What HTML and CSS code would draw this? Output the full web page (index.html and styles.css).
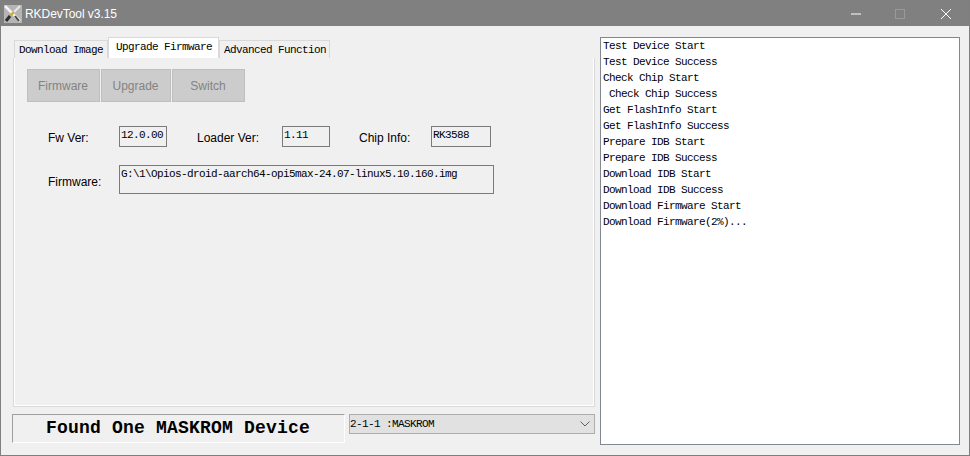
FILE: index.html
```html
<!DOCTYPE html>
<html lang="en">
<head>
<meta charset="utf-8">
<title>RKDevTool v3.15</title>
<link rel="stylesheet" href="styles.css">
</head>
<body>
<div class="window">
  <header class="titlebar">
    <svg class="app-icon" width="18" height="18" viewBox="0 0 18 18">
      <rect width="18" height="18" fill="#b5b5b5"/>
      <path d="M1 1L16 16" stroke="#f4f4f4" stroke-width="2.500"/>
      <path d="M16 1L9 8" stroke="#e8e8e8" stroke-width="2"/>
      <path d="M10 7L6 11" stroke="#c9b04a" stroke-width="2.500"/>
      <path d="M6 11L2 16" stroke="#2c2c2c" stroke-width="3"/>
      <path d="M11 11L15 16" stroke="#444" stroke-width="2"/>
    </svg>
    <span class="title">RKDevTool v3.15</span>
    <div class="controls">
      <svg class="ctl" width="46" height="26" viewBox="0 0 46 26"><path d="M20 13h10" stroke="#fff" fill="none"/></svg>
      <svg class="ctl" width="46" height="26" viewBox="0 0 46 26"><rect x="18.500" y="8.500" width="9" height="9" stroke="#999" fill="none"/></svg>
      <svg class="ctl" width="46" height="26" viewBox="0 0 46 26"><path d="M18 8l10 10M28 8L18 18" stroke="#fff" fill="none"/></svg>
    </div>
  </header>
  <main class="content">
    <section class="left">
      <nav class="tabs">
        <div class="tab">Download Image</div>
        <div class="tab active">Upgrade Firmware</div>
        <div class="tab">Advanced Function</div>
      </nav>
      <div class="pane">
        <div class="buttons">
          <div class="btn b1">Firmware</div>
          <div class="btn b2">Upgrade</div>
          <div class="btn b3">Switch</div>
        </div>
        <div class="info">
          <span class="label l1">Fw Ver:</span>
          <span class="field f1">12.0.00</span>
          <span class="label l2">Loader Ver:</span>
          <span class="field f2">1.11</span>
          <span class="label l3">Chip Info:</span>
          <span class="field f3">RK3588</span>
        </div>
        <div class="fwrow">
          <span class="label l1 fwlabel">Firmware:</span>
          <span class="field f4">G:\1\Opios-droid-aarch64-opi5max-24.07-linux5.10.160.img</span>
        </div>
      </div>
      <div class="bottom">
        <div class="status">Found One MASKROM Device</div>
        <div class="combo">
          <span>2-1-1 :MASKROM</span>
          <svg width="10" height="6" viewBox="0 0 10 6"><path d="M.5.500L5 5 9.500.500" stroke="#606060" fill="none"/></svg>
        </div>
      </div>
    </section>
    <aside class="log">
      <div>Test Device Start</div>
      <div>Test Device Success</div>
      <div>Check Chip Start</div>
      <div>&nbsp;Check Chip Success</div>
      <div>Get FlashInfo Start</div>
      <div>Get FlashInfo Success</div>
      <div>Prepare IDB Start</div>
      <div>Prepare IDB Success</div>
      <div>Download IDB Start</div>
      <div>Download IDB Success</div>
      <div>Download Firmware Start</div>
      <div>Download Firmware(2%)...</div>
    </aside>
  </main>
</div>
</body>
</html>
```
FILE: styles.css
```css
* { box-sizing: border-box; }
html, body { margin: 0; padding: 0; }
body { width: 970px; height: 456px; overflow: hidden; background: #f0f0f0; }
.window {
  width: 970px; height: 456px;
  border: 1px solid #7f7f7f;
  display: flex; flex-direction: column;
  background: #f0f0f0;
}
.titlebar {
  height: 25px; flex: none;
  background: #808080;
  display: flex; align-items: center;
  padding-left: 3px;
  color: #fff;
  font: 12px "Liberation Sans", sans-serif;
}
.app-icon { flex: none; }
.title { margin-left: 3px; letter-spacing: -0.05px; }
.controls { margin-left: auto; display: flex; }
.ctl { display: block; }
.content { flex: 1; display: flex; padding: 11px 9px 10px 11px; gap: 5px; min-height: 0; }
.left { width: 583px; flex: none; display: flex; flex-direction: column; }
.tabs {
  display: flex; height: 21px; padding-left: 2px; flex: none; align-items: flex-end;
  font: 11px/1 "Liberation Mono", monospace;
  letter-spacing: -0.6px;
  color: #000;
}
.tab {
  height: 18px; padding: 4px 0 0 4px;
  background: #f0f0f0;
  border: 1px solid #d9d9d9; border-bottom: 0;
  white-space: nowrap;
}
.tab:nth-child(1) { width: 94px; }
.tab:nth-child(3) { width: 111px; padding-left: 4px; }
.tab.active {
  height: 21px; width: 111px; background: #fff; padding: 4px 0 0 7px;
  border-bottom: 0;
}
.pane {
  height: 349px; flex: none;
  margin-left: 1px;
  border-left: 1px solid #d9d9d9;
  border-right: 1px solid #d9d9d9;
  border-bottom: 1px solid #d9d9d9;
  box-shadow: inset 1px 0 #fff, inset -1px 0 #fff, inset 0 -1px #fff;
  padding: 11px 0 0 13px;
  background: #f0f0f0;
}
.buttons { display: flex; gap: 1px; height: 33px; }
.btn {
  background: #cccccc; border: 1px solid #bfbfbf; color: #838383;
  font: 12px "Liberation Sans", sans-serif;
  display: flex; align-items: center; justify-content: center;
  padding-right: 1px;
}
.b1 { width: 73px; } .b2 { width: 70px; } .b3 { width: 73px; }
.info { display: flex; align-items: center; margin-top: 24px; height: 21px; }
.info .label { padding-top: 2px; }
.fwrow { display: flex; align-items: flex-start; margin-top: 18px; }
.label { font: 12px "Liberation Sans", sans-serif; color: #000; white-space: nowrap; }
.l1 { width: 92px; padding-left: 21px; flex: none; }
.l2 { width: 115px; padding-left: 30px; flex: none; }
.l3 { width: 101px; padding-left: 29px; flex: none; }
.fwlabel { margin-top: 10px; }
.field {
  border: 1px solid #7a7a7a; flex: none; display: block;
  font: 11px/1 "Liberation Mono", monospace;
  letter-spacing: -0.6px;
  color: #000; padding: 3px 0 0 1px; height: 21px;
  white-space: nowrap; overflow: hidden;
}
.f1 { width: 48px; } .f2 { width: 48px; } .f3 { width: 60px; }
.f4 { width: 375px; height: 29px; }
.bottom { display: flex; gap: 4px; margin-top: 7px; align-items: flex-start; }
.status {
  width: 333px; height: 29px; flex: none;
  border-top: 1px solid #a0a0a0; border-left: 1px solid #a0a0a0;
  border-right: 1px solid #fff; border-bottom: 1px solid #fff;
  padding: 4px 0 0 33px;
  font: bold 18px/1 "Liberation Mono", monospace;
  letter-spacing: 0.2px;
  white-space: nowrap; color: #000;
}
.combo {
  width: 246px; height: 20px; flex: none;
  background: #e1e1e1; border: 1px solid #adadad;
  display: flex; align-items: center; justify-content: space-between;
  padding: 0 4px 0 0;
  font: 11px/1 "Liberation Mono", monospace; letter-spacing: -0.6px; color: #000;
}
.log {
  width: 360px; flex: none;
  background: #fff; border: 1px solid #828790;
  padding: 0 0 0 2px;
  font: 11px/16px "Liberation Mono", monospace;
  letter-spacing: -0.6px;
  color: #000;
}
```
